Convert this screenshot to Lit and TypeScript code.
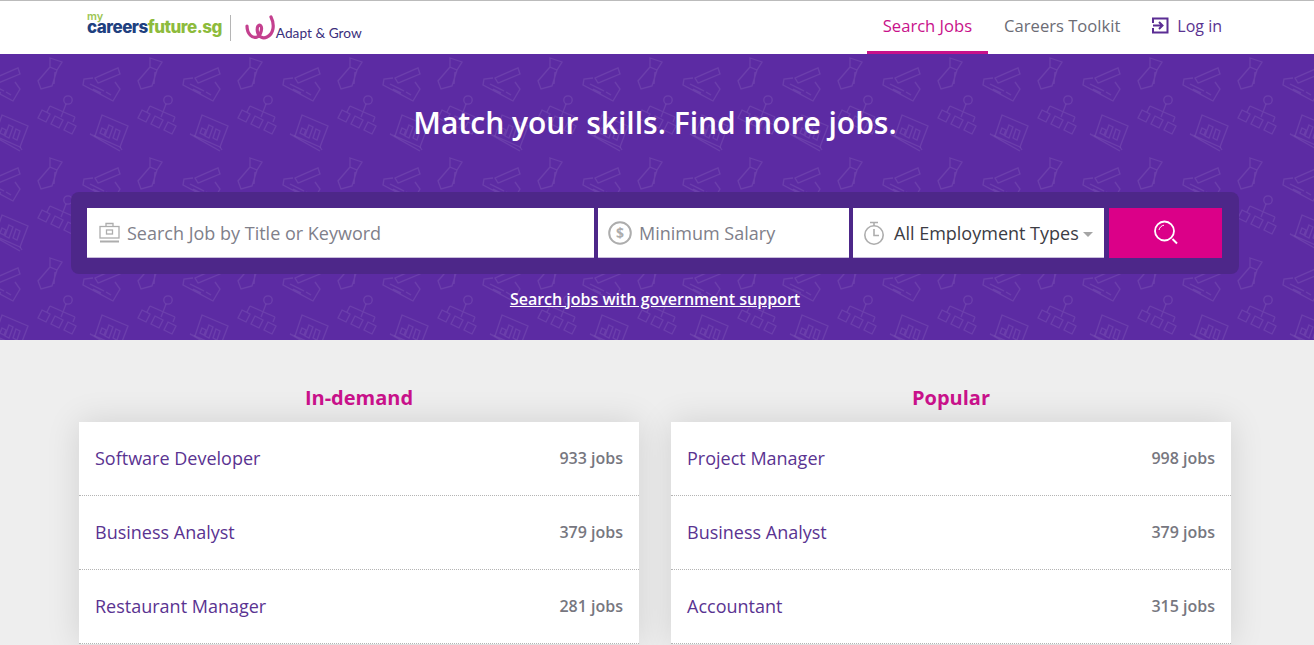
import { LitElement, html, css, svg } from 'lit';
import { customElement } from 'lit/decorators.js';

const IN_DEMAND = [
  ['Software Developer', '933 jobs'],
  ['Business Analyst', '379 jobs'],
  ['Restaurant Manager', '281 jobs'],
];

const POPULAR = [
  ['Project Manager', '998 jobs'],
  ['Business Analyst', '379 jobs'],
  ['Accountant', '315 jobs'],
];

// one cell of the hero wallpaper, drawn at x and again at x - 100 where it wraps
const card = svg`
  <path d="M93 24L84 25L83 31L113 47L120 35L115 28" />
  <path d="M95 24L118 14L120 20L98 29Z" />
  <path d="M90 30L104 37M106 38L111 41M93 35L101 39" />
`;
const laptop = svg`
  <path d="M102 61L128 72L120 93L95 82Z" />
  <path d="M90 80L120 97M95 82L90 80M120 93L122 96" />
  <path d="M102 74l4 2l-2 5l-4-2ZM109 71l4 2l-4 11l-4-2ZM116 75l4 2l-3 9l-4-2Z" />
`;

@customElement('app-root')
export class AppRoot extends LitElement {
  static styles = css`
    :host {
      display: block;
      height: 100vh;
      overflow: hidden;
      background: #eeeeee;
      font-family: 'Open Sans', sans-serif;
    }

    header {
      display: flex;
      justify-content: space-between;
      height: 53px;
      padding: 0 76px 0 87px;
      background: #fff;
      border-top: 1px solid #bbbbbb;
      position: relative;
      z-index: 1;
    }

    .logos {
      display: flex;
      align-items: center;
    }

    .cf {
      display: flex;
      flex-direction: column;
      align-self: flex-start;
      padding-top: 10px;
      font-family: 'Inter', sans-serif;
      font-weight: 800;
    }

    .cf .my {
      color: #9cc653;
      font-size: 11px;
      font-weight: 600;
      height: 10px;
      line-height: 10px;
    }

    .cf .name {
      font-size: 17px;
      line-height: 12px;
      letter-spacing: -0.5px;
      color: #20407f;
    }

    .cf .name b {
      font-weight: 800;
      color: #8dbb3c;
    }

    .rule {
      width: 1px;
      height: 26px;
      margin: 0 13px 0 8px;
      background: #b5b5b5;
    }

    .adapt {
      display: flex;
      align-items: flex-end;
      gap: 1px;
      color: #3b2f7c;
      font-family: 'Lato', sans-serif;
      font-size: 13.7px;
      line-height: 1;
    }

    .adapt span {
      margin-bottom: 1px;
    }

    nav {
      display: flex;
    }

    nav a {
      box-sizing: border-box;
      display: flex;
      align-items: center;
      gap: 8px;
      height: 53px;
      padding: 0 16px 1px;
      color: #6c6c75;
      font-size: 16.6px;
      border-bottom: 3px solid transparent;
    }

    nav a.active {
      color: #c8118a;
      border-bottom-color: #c8118a;
    }

    nav a.login {
      color: #5a3391;
      font-size: 16px;
    }

    .hero {
      position: relative;
      height: 286px;
      background: #5c2ba3;
      display: flex;
      flex-direction: column;
      align-items: center;
      box-sizing: border-box;
      padding: 46px 75px 0 71px;
      overflow: hidden;
    }

    .wallpaper {
      position: absolute;
      inset: 0;
      width: 100%;
      height: 100%;
    }

    .hero > :not(.wallpaper) {
      position: relative;
    }

    h1 {
      margin: 0 0 46px;
      height: 46px;
      color: #fff;
      font-size: 30px;
      line-height: 46px;
      font-weight: 600;
    }

    .search {
      box-sizing: border-box;
      align-self: stretch;
      display: flex;
      height: 82px;
      padding: 16px 17px 16px 16px;
      gap: 4px;
      background: #4d2789;
      border-radius: 8px;
    }

    .field {
      box-sizing: border-box;
      display: flex;
      align-items: center;
      height: 50px;
      background: #fff;
      border-bottom: 1px solid #c9bddb;
      color: #80808a;
      font-size: 18px;
      white-space: nowrap;
    }

    .field.keyword {
      width: 507px;
      padding-left: 12px;
      gap: 7px;
    }

    .field.salary {
      width: 251px;
      padding-left: 10px;
      gap: 7px;
    }

    .field.type {
      width: 251px;
      padding: 1px 0 0 10px;
      gap: 9px;
      color: #3c3c44;
    }

    .caret {
      width: 0;
      height: 0;
      margin: 2px 0 0 -5px;
      border-left: 5px solid transparent;
      border-right: 5px solid transparent;
      border-top: 5px solid #a5a5a5;
    }

    .go {
      display: flex;
      align-items: center;
      justify-content: center;
      width: 113px;
      height: 50px;
      margin-left: 1px;
      background: #db0088;
    }

    .gov {
      margin-top: 14px;
      color: #fff;
      font-size: 16px;
      line-height: 22px;
      font-weight: 600;
      text-decoration: underline;
    }

    .lists {
      display: grid;
      grid-template-columns: 560px 560px;
      gap: 32px;
      padding: 44px 83px 0 79px;
    }

    h2 {
      margin: 0 0 10px;
      color: #c8118a;
      font-size: 20px;
      line-height: 28px;
      font-weight: 700;
      text-align: center;
    }

    ul {
      margin: 0;
      padding: 0;
      list-style: none;
      background: #fff;
      box-shadow: 0 0 32px rgba(0, 0, 0, 0.12);
    }

    li {
      box-sizing: border-box;
      display: flex;
      align-items: center;
      justify-content: space-between;
      height: 74px;
      padding: 0 16px 2px;
      border-bottom: 1px dotted #b4b4b4;
      color: #5a3391;
      font-size: 18px;
    }

    li span {
      color: #77777f;
      font-size: 16px;
      font-weight: 600;
    }
  `;

  private wallpaper() {
    return html`
      <svg class="wallpaper" aria-hidden="true">
        <defs>
          <pattern id="cell" width="100" height="100" patternUnits="userSpaceOnUse">
            <g fill="none" stroke="#fff" stroke-opacity="0.09" stroke-width="1.3">
              <path d="M50 4L62 8L57 16L50 13ZM50 13L38 27L41 35L52 32L57 16M55 18L54 30" />
              ${card}
              <g transform="translate(-100 0)">${card}</g>
              <circle cx="68" cy="46" r="4.2" />
              <path d="M66 50L63 58M50 52L75 63M50 52L47 58M63 58L61 63M75 63L73 68" />
              <path d="M42 56l8 4l-4 8l-8-4ZM55 62l8 4l-4 8l-8-4ZM68 68l8 4l-4 8l-8-4Z" />
              ${laptop}
              <g transform="translate(-100 0)">${laptop}</g>
            </g>
          </pattern>
        </defs>
        <rect width="100%" height="100%" fill="url(#cell)" />
      </svg>
    `;
  }

  private list(title: string, rows: string[][]) {
    return html`
      <section>
        <h2>${title}</h2>
        <ul>
          ${rows.map(([name, count]) => html`<li>${name}<span>${count}</span></li>`)}
        </ul>
      </section>
    `;
  }

  render() {
    return html`
      <header>
        <div class="logos">
          <div class="cf">
            <span class="my">my</span>
            <span class="name">careers<b>future.sg</b></span>
          </div>
          <div class="rule"></div>
          <div class="adapt">
            <svg width="31" height="26" viewBox="0 0 31 26" fill="none" stroke="#c4408f" stroke-width="3.2" stroke-linecap="round">
              <path d="M3 11C3 19 8.500 24 13 22C17.500 20 18.500 12 16.500 10.500C14.500 9 12.500 12 13.500 17C14.500 22 19 24 23 22C29.500 19 31 10 27 2" />
            </svg>
            <span>Adapt &amp; Grow</span>
          </div>
        </div>
        <nav>
          <a class="active">Search Jobs</a>
          <a>Careers Toolkit</a>
          <a class="login">
            <svg width="17" height="17" viewBox="0 0 17 17" fill="none" stroke="#5b2d94" stroke-width="2">
              <path d="M1 6V1.500H15.500V15.500H1V11" />
              <path d="M1 8.500H10M7 5L10.500 8.500L7 12" />
            </svg>
            Log in
          </a>
        </nav>
      </header>

      <div class="hero">
        ${this.wallpaper()}
        <h1>Match your skills. Find more jobs.</h1>
        <div class="search">
          <div class="field keyword">
            <svg width="21" height="21" viewBox="0 0 21 21" fill="none" stroke="#adadad" stroke-width="1.300">
              <path d="M7 4.500V1.500H14V4.500" />
              <rect x="1" y="4.500" width="19" height="11.500" />
              <rect x="7.500" y="8" width="6" height="4" />
              <path d="M1 19.500H20" stroke-width="2" />
            </svg>
            Search Job by Title or Keyword
          </div>
          <div class="field salary">
            <svg width="24" height="24" viewBox="0 0 24 24" fill="none">
              <circle cx="12" cy="12" r="10.800" stroke="#adadad" stroke-width="2" />
              <text x="12" y="17" text-anchor="middle" fill="#adadad" font-size="14" font-weight="700">$</text>
            </svg>
            Minimum Salary
          </div>
          <div class="field type">
            <svg width="22" height="25" viewBox="0 0 22 25" fill="none" stroke="#adadad" stroke-width="1.600">
              <path d="M7 1.500H15M11 1.500V5" />
              <circle cx="11" cy="14" r="9.200" />
              <path d="M11 8V14.500H16" />
            </svg>
            All Employment Types
            <i class="caret"></i>
          </div>
          <div class="go">
            <svg width="26" height="26" viewBox="0 0 26 26" fill="none" stroke="#fff">
              <circle cx="11.500" cy="11" r="9.500" stroke-width="1.800" />
              <path d="M6 10C6.500 7.500 8.500 5.500 11 5.200" stroke-width="1" />
              <path d="M19.500 19L24 23.500" stroke-width="2" />
            </svg>
          </div>
        </div>
        <a class="gov">Search jobs with government support</a>
      </div>

      <div class="lists">
        ${this.list('In-demand', IN_DEMAND)}
        ${this.list('Popular', POPULAR)}
      </div>
    `;
  }
}
